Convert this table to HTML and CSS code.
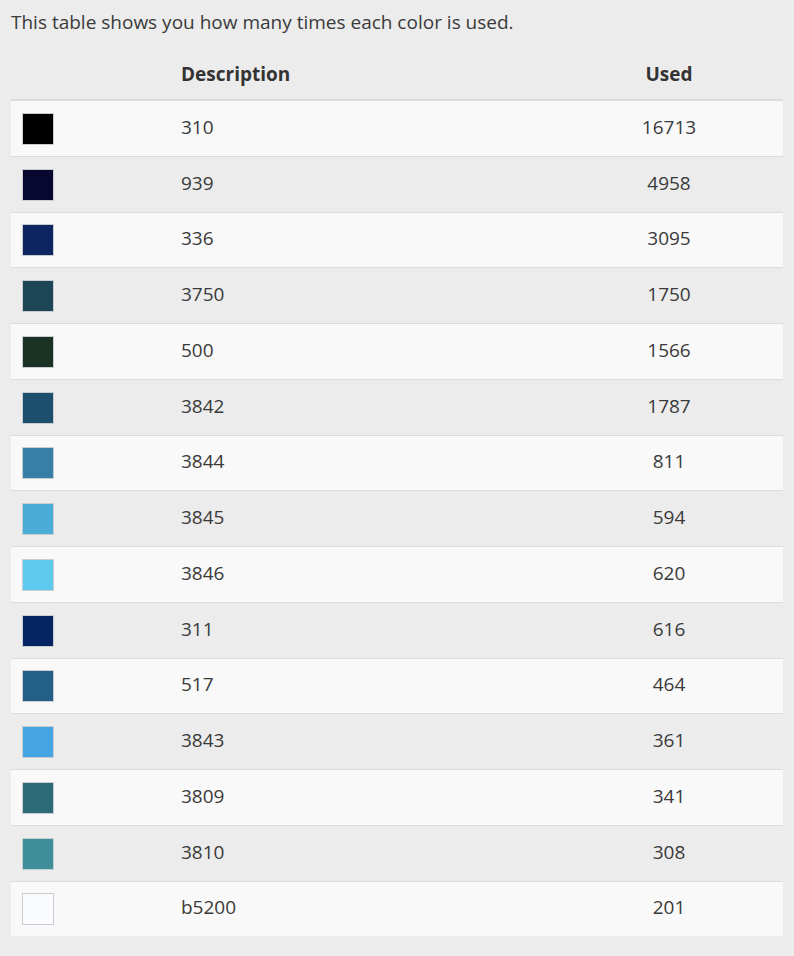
FILE: index.html
```html
<!DOCTYPE html>
<html>
<head>
<meta charset="utf-8">
<link rel="stylesheet" href="styles.css">
</head>
<body>
<div class="page">
  <p class="intro">This table shows you how many times each color is used.</p>
  <div class="table">
    <div class="row head">
      <div class="c1"></div>
      <div class="c2">Description</div>
      <div class="c3">Used</div>
    </div>
    <div class="row odd"><div class="c1"><span class="sw" style="background:#000000"></span></div><div class="c2">310</div><div class="c3">16713</div></div>
    <div class="row"><div class="c1"><span class="sw" style="background:#080730"></span></div><div class="c2">939</div><div class="c3">4958</div></div>
    <div class="row odd"><div class="c1"><span class="sw" style="background:#0d2561"></span></div><div class="c2">336</div><div class="c3">3095</div></div>
    <div class="row"><div class="c1"><span class="sw" style="background:#1c4655"></span></div><div class="c2">3750</div><div class="c3">1750</div></div>
    <div class="row odd"><div class="c1"><span class="sw" style="background:#1b3325"></span></div><div class="c2">500</div><div class="c3">1566</div></div>
    <div class="row"><div class="c1"><span class="sw" style="background:#1b4f6d"></span></div><div class="c2">3842</div><div class="c3">1787</div></div>
    <div class="row odd"><div class="c1"><span class="sw" style="background:#3580a4"></span></div><div class="c2">3844</div><div class="c3">811</div></div>
    <div class="row"><div class="c1"><span class="sw" style="background:#4aadd6"></span></div><div class="c2">3845</div><div class="c3">594</div></div>
    <div class="row odd"><div class="c1"><span class="sw" style="background:#5ecbee"></span></div><div class="c2">3846</div><div class="c3">620</div></div>
    <div class="row"><div class="c1"><span class="sw" style="background:#042462"></span></div><div class="c2">311</div><div class="c3">616</div></div>
    <div class="row odd"><div class="c1"><span class="sw" style="background:#235f87"></span></div><div class="c2">517</div><div class="c3">464</div></div>
    <div class="row"><div class="c1"><span class="sw" style="background:#45a5e3"></span></div><div class="c2">3843</div><div class="c3">361</div></div>
    <div class="row odd"><div class="c1"><span class="sw" style="background:#2d6b76"></span></div><div class="c2">3809</div><div class="c3">341</div></div>
    <div class="row"><div class="c1"><span class="sw" style="background:#3d8e99"></span></div><div class="c2">3810</div><div class="c3">308</div></div>
    <div class="row odd last"><div class="c1"><span class="sw" style="background:#fafbff"></span></div><div class="c2">b5200</div><div class="c3">201</div></div>
  </div>
</div>
</body>
</html>
```

FILE: styles.css
```css
html, body {
  margin: 0;
  padding: 0;
  background: #ececec;
}
body {
  font-family: "Open Sans", "DejaVu Sans", sans-serif;
  color: #3a3a3a;
  font-size: 19px;
}
.page {
  padding: 9px 11px 0 11px;
}
.intro {
  margin: 0;
  line-height: 26px;
  font-size: 19px;
  color: #3a3a3a;
}
.table {
  width: 772px;
  margin-top: 12px;
}
.row {
  display: grid;
  grid-template-columns: 170px 1fr 228px;
  align-items: center;
  height: 54.75px;
  border-bottom: 1px solid #dcdcdc;
  font-size: 19px;
  line-height: 26px;
}
.row.head {
  height: 52px;
  border-bottom: 2px solid #dcdcdc;
  font-weight: 700;
  color: #333;
}
.row.head .c2, .row.head .c3 {
  padding-bottom: 0;
  padding-top: 2px;
}
.row.odd {
  background: #f9f9f9;
}
.row.last {
  border-bottom: none;
}
.c2, .c3 {
  padding-bottom: 3px;
}
.c1 {
  padding-left: 11px;
  padding-top: 1px;
  display: flex;
  align-items: center;
}
.c3 {
  text-align: center;
}
.sw {
  display: block;
  width: 30px;
  height: 30px;
  border: 1px solid #c9ccd0;
}
```
